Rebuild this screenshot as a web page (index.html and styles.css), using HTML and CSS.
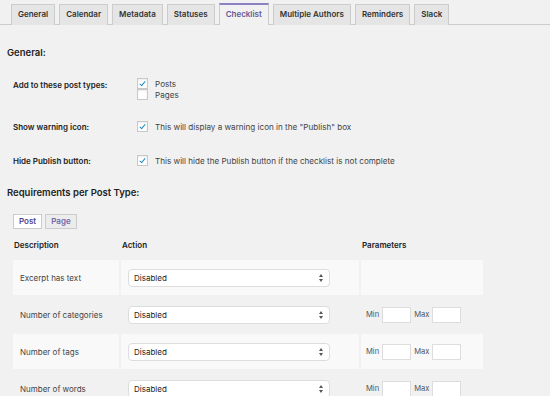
FILE: index.html
```html
<!DOCTYPE HTML>
<html>
<head>
	<meta http-equiv="Content-Type" content="text/html; charset=utf-8">
	<title>Checklist settings</title>
	<link rel="stylesheet" href="styles.css">
</head>
<body>
<div class="tabs">
	<a class="tab">General</a>
	<a class="tab">Calendar</a>
	<a class="tab">Metadata</a>
	<a class="tab">Statuses</a>
	<a class="tab active">Checklist</a>
	<a class="tab">Multiple Authors</a>
	<a class="tab">Reminders</a>
	<a class="tab">Slack</a>
</div>

<div class="page">
	<h2 class="h">General:</h2>

	<div class="row first">
		<div class="lbl">Add to these post types:</div>
		<div class="opts">
			<label class="opt"><span class="cb on"></span>Posts</label>
			<label class="opt"><span class="cb"></span>Pages</label>
		</div>
	</div>

	<div class="row second">
		<div class="lbl">Show warning icon:</div>
		<div class="opts">
			<label class="opt"><span class="cb on"></span>This will display a warning icon in the "Publish" box</label>
		</div>
	</div>

	<div class="row third">
		<div class="lbl">Hide Publish button:</div>
		<div class="opts">
			<label class="opt"><span class="cb on"></span>This will hide the Publish button if the checklist is not complete</label>
		</div>
	</div>

	<h2 class="h req">Requirements per Post Type:</h2>

	<div class="types">
		<span class="type active">Post</span>
		<span class="type">Page</span>
	</div>

	<table class="reqs">
		<thead>
			<tr><th class="c1">Description</th><th class="c2">Action</th><th class="c3">Parameters</th></tr>
		</thead>
		<tbody>
			<tr class="alt">
				<td>Excerpt has text</td>
				<td><div class="sel">Disabled</div></td>
				<td></td>
			</tr>
			<tr>
				<td>Number of categories</td>
				<td><div class="sel">Disabled</div></td>
				<td><div class="mm">Min <span class="num"></span> Max <span class="num"></span></div></td>
			</tr>
			<tr class="alt">
				<td>Number of tags</td>
				<td><div class="sel">Disabled</div></td>
				<td><div class="mm">Min <span class="num"></span> Max <span class="num"></span></div></td>
			</tr>
			<tr>
				<td>Number of words</td>
				<td><div class="sel">Disabled</div></td>
				<td><div class="mm">Min <span class="num"></span> Max <span class="num"></span></div></td>
			</tr>
		</tbody>
	</table>
</div>
</body>
</html>
```

FILE: styles.css
```css
body {
	background:#f1f1f1;
	margin:0;
	font-family:Inter, "Liberation Sans", sans-serif;
	color:#444;
	overflow:hidden;
	}
.tabs {
	display:flex;
	gap:4px;
	padding:4px 0 0 11px;
	border-bottom:1px solid #ccc;
	height:20px;
	}
.tab {
	display:block;
	box-sizing:border-box;
	height:21px;
	padding:0 6px;
	line-height:19px;
	font-size:8px;
	font-weight:600;
	color:#333;
	background:#e5e5e5;
	border:1px solid #ccc;
	border-bottom:none;
	}
.tab.active {
	background:#f1f1f1;
	color:#655997;
	border-top:2px solid #8b80c0;
	margin-top:-1px;
	height:22px;
	}
.page {
	padding:0 0 0 7px;
	}
.h {
	margin:0;
	padding:21px 0 0 0;
	font-size:9.5px;
	font-weight:600;
	color:#222;
	line-height:14px;
	}
.h.req {
	padding-top:19px;
	}
.row {
	display:flex;
	padding:0 0 0 6px;
	margin-top:18px;
	}
.row.second {
	margin-top:21px;
	}
.row.third {
	margin-top:22px;
	}
.lbl {
	width:124px;
	font-size:8px;
	font-weight:600;
	color:#222;
	line-height:12px;
	}
.row.first .lbl {
	padding-top:1px;
	}
.opts {
	display:flex;
	flex-direction:column;
	}
.opt {
	display:flex;
	align-items:center;
	height:11px;
	font-size:8.1px;
	color:#444;
	}
.cb {
	box-sizing:border-box;
	width:11px;
	height:11px;
	border:1px solid #c8c8c8;
	background:#fff;
	margin-right:7px;
	position:relative;
	box-shadow:inset 0 1px 2px rgba(0,0,0,0.08);
	}
.cb.on::after {
	content:"";
	position:absolute;
	left:3px;
	top:1px;
	width:2px;
	height:5px;
	border:solid #1e8cbe;
	border-width:0 1.6px 1.6px 0;
	transform:rotate(40deg);
	}
.types {
	display:flex;
	gap:3px;
	padding:14px 0 0 6px;
	}
.type {
	box-sizing:border-box;
	height:15px;
	line-height:13px;
	padding:0 5px;
	font-size:8px;
	font-weight:600;
	color:#7266ad;
	background:#ececec;
	border:1px solid #ccc;
	}
.type.active {
	background:#fff;
	color:#4f4391;
	}
.reqs {
	border-spacing:2px;
	margin:6px 0 0 4px;
	width:474px;
	}
.reqs th {
	text-align:left;
	font-size:8px;
	font-weight:600;
	color:#222;
	padding:3px 0 8px 1px;
	}
.reqs th.c1 { width:105px; }
.reqs th.c2 { width:237px; }
.reqs td {
	height:35px;
	padding:0 0 0 7px;
	font-size:8px;
	color:#444;
	}
.reqs td + td + td {
	padding-left:5px;
	}
.reqs tr.alt td {
	background:#f9f9f9;
	}
.sel {
	box-sizing:border-box;
	width:202px;
	height:18px;
	line-height:16px;
	padding:0 5px;
	font-size:8px;
	color:#222;
	background:#fff;
	border:1px solid #ddd;
	border-radius:4px;
	position:relative;
	}
.sel::after {
	content:"";
	position:absolute;
	right:6px;
	top:4px;
	width:0;
	height:0;
	border-left:2px solid transparent;
	border-right:2px solid transparent;
	border-bottom:3px solid #555;
	}
.sel::before {
	content:"";
	position:absolute;
	right:6px;
	top:9px;
	width:0;
	height:0;
	border-left:2px solid transparent;
	border-right:2px solid transparent;
	border-top:3px solid #555;
	}
.mm {
	display:flex;
	align-items:center;
	gap:3px;
	font-size:7.6px;
	color:#555;
	}
.num {
	box-sizing:border-box;
	width:29px;
	height:16px;
	background:#fff;
	border:1px solid #ddd;
	}
```
